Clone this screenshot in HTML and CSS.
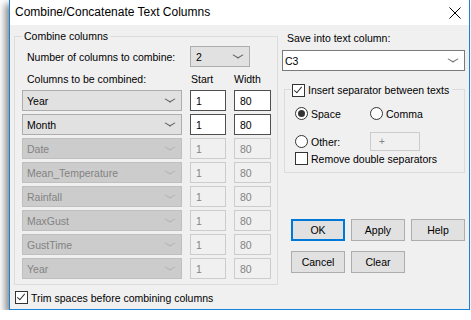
FILE: index.html
```html
<!DOCTYPE html>
<html lang="en">
<head>
    <meta charset="UTF-8">
    <title>Combine/Concatenate Text Columns</title>
    <link rel="stylesheet" href="styles.css">
</head>
<body>
    <div class="window">
        <div class="titlebar">
            <span class="title">Combine/Concatenate Text Columns</span>
            <svg class="close" width="12" height="12" viewBox="0 0 12 12"><path d="M0.5 0.5 L11.5 11.5 M11.5 0.5 L0.5 11.5" stroke="#000" stroke-width="1" fill="none"/></svg>
        </div>

        <div class="content">
            <!-- Left side -->
            <div class="left">
                <div class="group combine">
                    <span class="legend">Combine columns</span>
                    <div class="col-grid">
                        <div class="lbl">Number of columns to combine:</div>
                        <div class="combo num-combo"><span class="val">2</span><span class="chev"></span></div>

                        <div class="lbl head">Columns to be combined:</div>
                        <div class="head start">Start</div>
                        <div class="head">Width</div>

                        <div class="combo"><span class="val">Year</span><span class="chev"></span></div>
                        <div class="field">1</div>
                        <div class="field">80</div>

                        <div class="combo"><span class="val">Month</span><span class="chev"></span></div>
                        <div class="field">1</div>
                        <div class="field">80</div>

                        <div class="combo disabled"><span class="val">Date</span><span class="chev"></span></div>
                        <div class="field disabled">1</div>
                        <div class="field disabled">80</div>

                        <div class="combo disabled"><span class="val">Mean_Temperature</span><span class="chev"></span></div>
                        <div class="field disabled">1</div>
                        <div class="field disabled">80</div>

                        <div class="combo disabled"><span class="val">Rainfall</span><span class="chev"></span></div>
                        <div class="field disabled">1</div>
                        <div class="field disabled">80</div>

                        <div class="combo disabled"><span class="val">MaxGust</span><span class="chev"></span></div>
                        <div class="field disabled">1</div>
                        <div class="field disabled">80</div>

                        <div class="combo disabled"><span class="val">GustTime</span><span class="chev"></span></div>
                        <div class="field disabled">1</div>
                        <div class="field disabled">80</div>

                        <div class="combo disabled"><span class="val">Year</span><span class="chev"></span></div>
                        <div class="field disabled">1</div>
                        <div class="field disabled">80</div>
                    </div>
                </div>

                <div class="check-row trim">
                    <span class="checkbox checked"></span>
                    <span>Trim spaces before combining columns</span>
                </div>
            </div>

            <!-- Right side -->
            <div class="right">
                <div class="lbl save-lbl">Save into text column:</div>
                <div class="combo white"><span class="val">C3</span><span class="chev"></span></div>

                <div class="group separator">
                    <div class="legend check-row">
                        <span class="checkbox checked"></span>
                        <span>Insert separator between texts</span>
                    </div>
                    <div class="radio-grid">
                        <div class="radio-row"><span class="radio on"></span><span>Space</span></div>
                        <div class="radio-row"><span class="radio"></span><span>Comma</span></div>
                        <div class="radio-row"><span class="radio"></span><span>Other:</span></div>
                        <div class="field disabled other">+</div>
                    </div>
                    <div class="check-row remove">
                        <span class="checkbox"></span>
                        <span>Remove double separators</span>
                    </div>
                </div>

                <div class="buttons">
                    <button class="btn default">OK</button>
                    <button class="btn">Apply</button>
                    <button class="btn">Help</button>
                    <button class="btn">Cancel</button>
                    <button class="btn">Clear</button>
                </div>
            </div>
        </div>
    </div>
</body>
</html>
```

FILE: styles.css
```css
:root {
    --face: #f0f0f0;
    --btn-face: #e1e1e1;
    --btn-border: #adadad;
    --accent: #1883d7;
    --disabled-text: #838383;
}

body {
    margin: 0;
    background: #fff;
    font-family: "Liberation Sans", Arial, sans-serif;
    font-size: 10.5px;
    color: #000;
    white-space: nowrap;
}

/* Window frame */
.window {
    margin-left: 9px;
    width: 461px;
    height: 310px;
    box-sizing: border-box;
    border: 1px solid var(--accent);
    border-top: none;
    background: var(--face);
    box-shadow: -4px 4px 7px rgba(0, 0, 0, 0.45);
    display: flex;
    flex-direction: column;
}

.titlebar {
    height: 25px;
    background: #fff;
    display: flex;
    align-items: center;
    justify-content: space-between;
    padding: 0 8px 0 5px;
}

.title {
    font-size: 12px;
    padding-bottom: 1px;
}

.close {
    display: block;
}

.content {
    display: flex;
    gap: 4px;
    padding: 0 4px;
}

/* Group boxes */
.group {
    position: relative;
    border: 1px solid #dcdcdc;
}

.legend {
    position: absolute;
    top: -8px;
    left: 7px;
    background: var(--face);
    padding: 0 2px;
    line-height: 14px;
}

.left {
    width: 264px;
}

.combine {
    margin-top: 11px;
    padding: 9px 0 5px 7px;
}

.col-grid {
    display: grid;
    grid-template-columns: 160px 36px 37px;
    grid-template-rows: 21px 17px repeat(8, 21px);
    column-gap: 8px;
    row-gap: 3px;
}

.lbl {
    display: flex;
    align-items: center;
    padding-left: 5px;
}

.head {
    display: flex;
    align-items: center;
}

.head.start {
    padding-left: 1px;
}

/* Combo boxes */
.combo {
    display: flex;
    align-items: center;
    box-sizing: border-box;
    height: 21px;
    background: var(--btn-face);
    border: 1px solid var(--btn-border);
    padding: 0 5px 0 4px;
}

.combo .val {
    flex: 1;
}

.chev {
    flex-shrink: 0;
    width: 5px;
    height: 5px;
    border-right: 1px solid #606060;
    border-bottom: 1px solid #606060;
    transform: scale(1.3, 0.8) rotate(45deg);
    margin: 0 3px 3px 0;
}

.num-combo {
    grid-column: 2 / 4;
    width: 60px;
    padding-left: 5px;
}

.combo.disabled {
    background: #cccccc;
    border-color: #bfbfbf;
    color: var(--disabled-text);
}

.combo.disabled .chev {
    border-color: #b4b4b4;
}

.combo.white {
    background: #fff;
    border-color: #7a7a7a;
    margin-top: 5px;
    padding-left: 2px;
}

.combo.white .chev {
    border-color: #707070;
}

/* Text fields */
.field {
    box-sizing: border-box;
    height: 21px;
    background: #fff;
    border: 1px solid #4f4f4f;
    padding-left: 5px;
    display: flex;
    align-items: center;
}

.field.disabled {
    background: var(--face);
    border-color: #cccccc;
    color: var(--disabled-text);
}

/* Checkboxes and radios */
.check-row {
    display: flex;
    align-items: center;
    gap: 3px;
}

.checkbox {
    flex-shrink: 0;
    width: 13px;
    height: 13px;
    box-sizing: border-box;
    background: #fff;
    border: 1px solid #333;
    position: relative;
}

.checkbox.checked::after {
    content: "";
    position: absolute;
    left: 3px;
    top: 0px;
    width: 3px;
    height: 7px;
    border-right: 1px solid #333;
    border-bottom: 1px solid #333;
    transform: rotate(40deg);
}

.trim {
    margin-top: 6px;
    padding-left: 1px;
}

.right {
    width: 183px;
}

.save-lbl {
    margin-top: 6px;
    line-height: 14px;
}

.separator {
    margin: 18px 0 0 2px;
    padding: 14px 0 7px 10px;
}

.separator .legend {
    top: -7px;
    left: 6px;
    padding: 0 3px 0 1px;
}

.radio-grid {
    display: grid;
    grid-template-columns: 75px 50px;
    grid-auto-rows: 19px;
    row-gap: 9px;
}

.radio-row {
    display: flex;
    align-items: center;
    gap: 3px;
}

.radio {
    flex-shrink: 0;
    width: 13px;
    height: 13px;
    box-sizing: border-box;
    border: 1px solid #333;
    border-radius: 50%;
    background: #fff;
    display: flex;
    align-items: center;
    justify-content: center;
}

.radio.on::after {
    content: "";
    width: 7px;
    height: 7px;
    border-radius: 50%;
    background: #333;
}

.field.other {
    height: 19px;
    padding-left: 8px;
    font-size: 10px;
}

.remove {
    margin-top: 1px;
}

/* Buttons */
.buttons {
    margin: 46px 0 0 9px;
    display: grid;
    grid-template-columns: repeat(3, 54px);
    grid-auto-rows: 22px;
    column-gap: 6px;
    row-gap: 10px;
}

.btn {
    margin: 0;
    padding: 0;
    font: inherit;
    color: #000;
    background: var(--btn-face);
    border: 1px solid var(--btn-border);
}

.btn.default {
    border: 2px solid #0078d7;
}
```
